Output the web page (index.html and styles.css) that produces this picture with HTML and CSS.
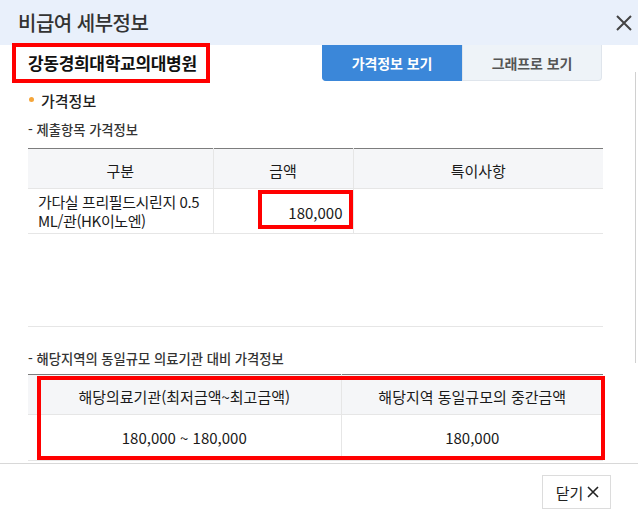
FILE: index.html
```html
<!DOCTYPE html>
<html lang="ko">
<head>
<meta charset="utf-8">
<link rel="stylesheet" href="styles.css">
</head>
<body>
<div class="modal">
  <div class="header">
    <h1 class="title">비급여 세부정보</h1>
    <button class="close" aria-label="닫기">
      <svg width="16" height="16" viewBox="0 0 16 16"><path d="M1 1L15 15M15 1L1 15" stroke="#444" stroke-width="2" fill="none"/></svg>
    </button>
  </div>
  <div class="toprow">
    <div class="hospital">강동경희대학교의대병원</div>
    <div class="tabs">
      <button class="tab active">가격정보 보기</button>
      <button class="tab">그래프로 보기</button>
    </div>
  </div>
  <div class="content">
    <div class="sec-title"><span class="dot"></span>가격정보</div>
    <div class="sub-title">- 제출항목 가격정보</div>
    <div class="box1">
      <table class="tbl tbl1">
        <colgroup><col class="c1"><col class="c2"><col></colgroup>
        <thead>
          <tr><th>구분</th><th>금액</th><th>특이사항</th></tr>
        </thead>
        <tbody>
          <tr>
            <td class="name"><span class="nw">가다실 프리필드시린지 0.5</span><br>ML/관(HK이노엔)</td>
            <td class="amt"><span class="mark"></span>180,000</td>
            <td></td>
          </tr>
        </tbody>
      </table>
    </div>
    <div class="sub-title sub2">- 해당지역의 동일규모 의료기관 대비 가격정보</div>
    <div class="tbl2wrap">
      <table class="tbl tbl2">
        <colgroup><col class="d1"><col></colgroup>
        <thead>
          <tr><th>해당의료기관(최저금액~최고금액)</th><th>해당지역 동일규모의 중간금액</th></tr>
        </thead>
        <tbody>
          <tr><td>180,000 ~ 180,000</td><td>180,000</td></tr>
        </tbody>
      </table>
      <span class="mark2"></span>
    </div>
  </div>
  <div class="footer">
    <button class="closebtn">닫기<svg width="12" height="12" viewBox="0 0 12 12"><path d="M1 1L11 11M11 1L1 11" stroke="#222" stroke-width="1.6" fill="none"/></svg></button>
  </div>
  <span class="scrollline"></span>
</div>
</body>
</html>
```

FILE: styles.css
```css
* { box-sizing: border-box; }
html, body { margin: 0; padding: 0; }
body {
  font-family: "Noto Sans CJK KR", "Noto Sans", sans-serif;
  color: #1a1a1a;
  background: #fff;
}
.modal {
  position: relative;
  width: 638px;
  height: 514px;
  overflow: hidden;
}
.header {
  height: 45px;
  background: #e9f0fb;
  display: flex;
  align-items: center;
  justify-content: space-between;
  padding: 0 6px 0 18px;
}
.title {
  margin: 0;
  font-size: 20px;
  font-weight: 500;
  color: #333;
  letter-spacing: -0.5px;
}
.close {
  border: 0;
  background: none;
  padding: 0;
  width: 16px;
  height: 16px;
  display: flex;
}
.toprow {
  display: flex;
  justify-content: space-between;
  align-items: flex-start;
  height: 38px;
  padding: 0 36px 0 12px;
}
.hospital {
  margin-top: -2px;
  width: 198px;
  height: 40px;
  border: 4px solid #ff0000;
  padding-left: 12px;
  font-size: 17px;
  font-weight: 700;
  line-height: 32px;
  letter-spacing: -0.3px;
  color: #111;
  white-space: nowrap;
}
.tabs { display: flex; }
.tab {
  width: 140px;
  height: 36px;
  border: 1px solid #dfe5ec;
  border-top: 0;
  background: #eef3f8;
  color: #555;
  font-family: inherit;
  font-size: 14px;
  font-weight: 700;
  letter-spacing: -0.1px;
  border-radius: 0 0 4px 0;
  padding: 0;
}
.tab.active {
  background: #3b87d9;
  border-color: #3b87d9;
  color: #fff;
  border-radius: 0 0 0 4px;
}
.content {
  padding: 8px 35px 0 28px;
}
.sec-title {
  display: flex;
  align-items: center;
  height: 18px;
  font-size: 15px;
  font-weight: 500;
  color: #222;
}
.dot {
  width: 5px;
  height: 5px;
  border-radius: 50%;
  background: #f5a53a;
  margin: 0 7px 0 1px;
  position: relative;
  top: -1px;
}
.sub-title {
  margin-top: 12px;
  height: 18px;
  line-height: 18px;
  font-size: 13.3px;
  font-weight: 500;
  color: #333;
}
.box1 {
  margin-top: 9px;
  height: 179px;
  border-bottom: 1px solid #e6e6e6;
}
.tbl {
  width: 100%;
  border-collapse: collapse;
  border-top: 1px solid #7d7d7d;
  table-layout: fixed;
}
.tbl th {
  height: 40px;
  background: #f5f6f8;
  font-weight: 400;
  font-size: 15px;
  color: #1a1a1a;
  border-bottom: 1px solid #e6e6e6;
  border-left: 1px solid #e6e6e6;
  padding: 4px 0 0;
}
.tbl td {
  font-size: 15px;
  color: #1a1a1a;
  border-bottom: 1px solid #e6e6e6;
  border-left: 1px solid #e6e6e6;
}
.tbl th:first-child, .tbl td:first-child { border-left: 0; }
.c1 { width: 185px; }
.c2 { width: 140px; }
.tbl1 td {
  height: 45px;
  line-height: 19px;
  padding: 3px 0 3px 10px;
  vertical-align: middle;
}
.tbl1 td.name { letter-spacing: -0.4px; }
.nw { white-space: nowrap; }
.tbl1 td.amt {
  position: relative;
  text-align: right;
  padding-right: 10px;
  padding-top: 6px;
}
.mark {
  position: absolute;
  left: 44px;
  top: 1px;
  width: 95px;
  height: 39px;
  border: 4px solid #ff0000;
}
.sub2 { margin-top: 23px; }
.tbl2wrap {
  position: relative;
  margin-top: 6px;
}
.d1 { width: 313px; }
.tbl2 th { height: 40px; text-align: center; }
.tbl2 td {
  height: 46px;
  text-align: center;
  vertical-align: middle;
}
.mark2 {
  position: absolute;
  left: 9px;
  top: 2px;
  width: 568px;
  height: 84px;
  border: 4px solid #ff0000;
}
.footer {
  position: absolute;
  left: 0;
  right: 0;
  top: 463px;
  height: 51px;
  border-top: 1px solid #d8d8d8;
  display: flex;
  justify-content: flex-end;
  padding: 11px 27px 0 0;
}
.closebtn {
  width: 69px;
  height: 34px;
  border: 1px solid #dcdcdc;
  background: #fff;
  font-family: inherit;
  font-size: 15px;
  color: #222;
  display: flex;
  align-items: center;
  justify-content: center;
  gap: 4px;
  padding: 0 0 0 2px;
}
.scrollline {
  position: absolute;
  left: 635px;
  top: 72px;
  width: 1px;
  height: 291px;
  background: #d0d0d0;
}
```
